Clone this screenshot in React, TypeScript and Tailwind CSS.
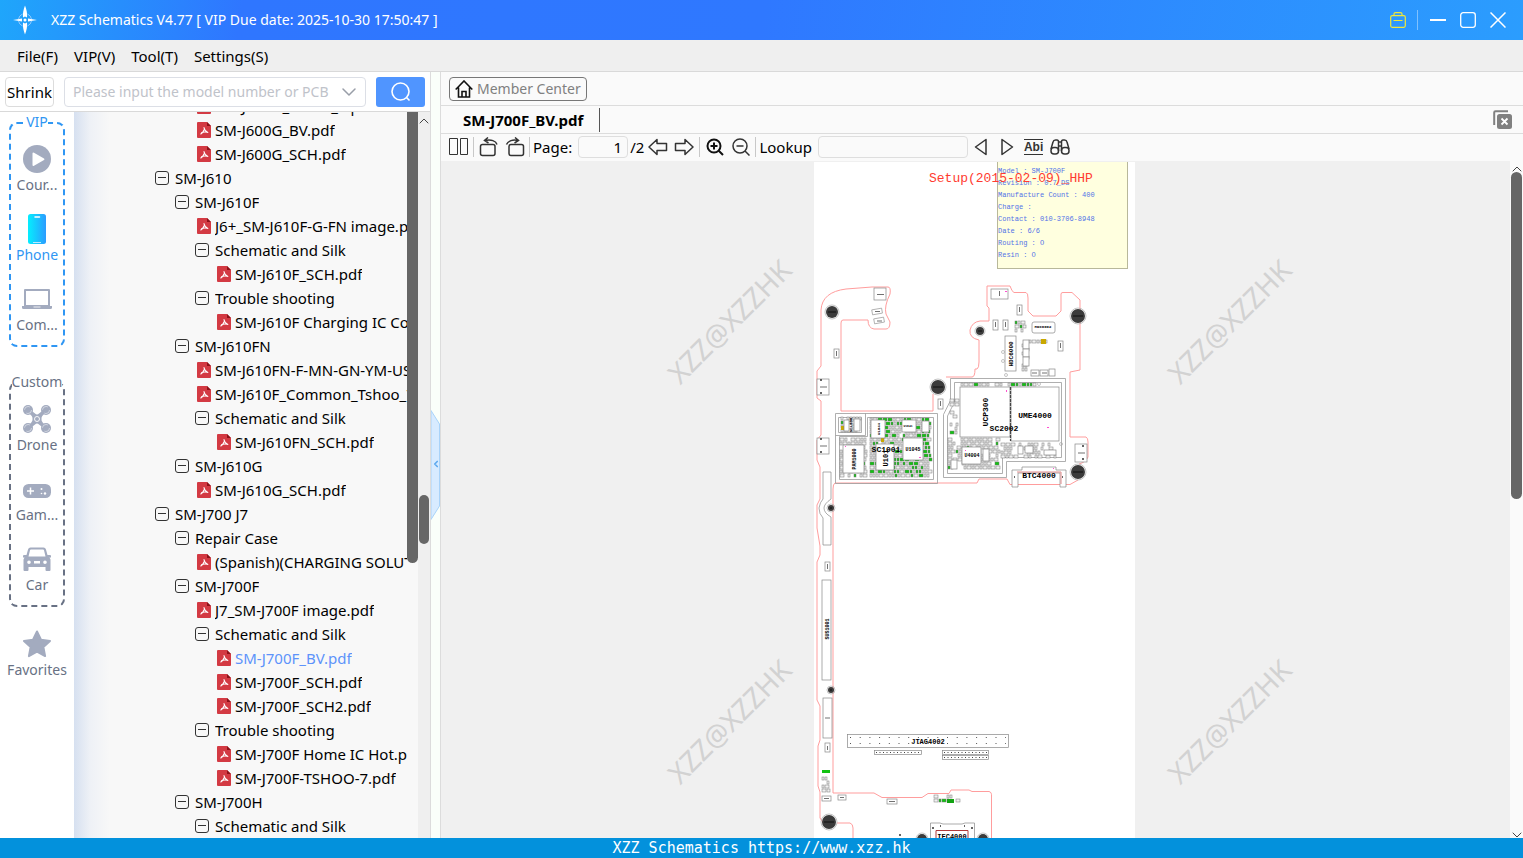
import React, { useState } from 'react';
import { ChevronDown, ChevronUp, ChevronLeft } from 'lucide-react';

type TreeRow = {
  label: string;
  depth: number;
  file?: boolean;
};

const indents = ['pl-[81px]', 'pl-[101px]', 'pl-[121px]', 'pl-[141px]'];

const treeRows: TreeRow[] = [
  { label: 'SM-J600G_Tshoo_7.pdf', depth: 2, file: true },
  { label: 'SM-J600G_BV.pdf', depth: 2, file: true },
  { label: 'SM-J600G_SCH.pdf', depth: 2, file: true },
  { label: 'SM-J610', depth: 0 },
  { label: 'SM-J610F', depth: 1 },
  { label: 'J6+_SM-J610F-G-FN image.pdf', depth: 2, file: true },
  { label: 'Schematic and Silk', depth: 2 },
  { label: 'SM-J610F_SCH.pdf', depth: 3, file: true },
  { label: 'Trouble shooting', depth: 2 },
  { label: 'SM-J610F Charging IC Code.pdf', depth: 3, file: true },
  { label: 'SM-J610FN', depth: 1 },
  { label: 'SM-J610FN-F-MN-GN-YM-US.pdf', depth: 2, file: true },
  { label: 'SM-J610F_Common_Tshoo_7.pdf', depth: 2, file: true },
  { label: 'Schematic and Silk', depth: 2 },
  { label: 'SM-J610FN_SCH.pdf', depth: 3, file: true },
  { label: 'SM-J610G', depth: 1 },
  { label: 'SM-J610G_SCH.pdf', depth: 2, file: true },
  { label: 'SM-J700 J7', depth: 0 },
  { label: 'Repair Case', depth: 1 },
  { label: '(Spanish)(CHARGING SOLUT.pdf', depth: 2, file: true },
  { label: 'SM-J700F', depth: 1 },
  { label: 'J7_SM-J700F image.pdf', depth: 2, file: true },
  { label: 'Schematic and Silk', depth: 2 },
  { label: 'SM-J700F_BV.pdf', depth: 3, file: true },
  { label: 'SM-J700F_SCH.pdf', depth: 3, file: true },
  { label: 'SM-J700F_SCH2.pdf', depth: 3, file: true },
  { label: 'Trouble shooting', depth: 2 },
  { label: 'SM-J700F Home IC Hot.pdf', depth: 3, file: true },
  { label: 'SM-J700F-TSHOO-7.pdf', depth: 3, file: true },
  { label: 'SM-J700H', depth: 1 },
  { label: 'Schematic and Silk', depth: 2 }
];

const PdfIcon = () => (
  <svg viewBox="0 0 14 16" className="h-4 w-3.5 shrink-0">
    <path d="M1 0h9l4 4v11a1 1 0 0 1-1 1H1a1 1 0 0 1-1-1V1a1 1 0 0 1 1-1z" fill="#d33a43" />
    <path d="M10 0l4 4h-4z" fill="#8c1219" />
    <path d="M7 5.500Q7.300 8.500 10.800 10.500M7.300 7.500Q6 10.500 3.800 12M4.500 10.800Q7 9.500 10.500 10.300" fill="none" stroke="#fff" strokeWidth="1.100" strokeLinecap="round" />
  </svg>
);

const CollapseIcon = () => (
  <svg viewBox="0 0 14 14" className="h-3.5 w-3.5 shrink-0" fill="none" stroke="#333">
    <rect x="0.5" y="0.5" width="13" height="13" rx="2.500" />
    <path d="M3 6.500h8" />
  </svg>
);

const LogoIcon = () => (
  <svg viewBox="0 0 24 30" className="h-[30px] w-6" fill="#fff">
    <path d="M12 0.500c1.500 4 2.500 8 2 12l-2-1-2 1c-.5-4 .5-8 2-12z" />
    <path d="M12 29.500c1.500-4 2.500-8 2-12l-2 1-2-1c-.5 4 .5 8 2 12z" />
    <path d="M0 15l9-1.500v3zM24 15l-9-1.500v3z" />
    <path d="M5.500 14a7 7 0 0 1 4-5M14.500 9a7 7 0 0 1 4 5M18.500 16a7 7 0 0 1-4 5M9.500 21a7 7 0 0 1-4-5" fill="none" stroke="#8fcaff" strokeWidth="1" />
    <circle cx="12" cy="15" r="1.500" />
  </svg>
);

const CourseIcon = () => (
  <svg viewBox="0 0 28 28" className="h-7 w-7">
    <circle cx="14" cy="14" r="14" fill="#a3abbf" />
    <path d="M9.500 8.500v11.500a1 1 0 0 0 1.500.8l10-5.800a1 1 0 0 0 0-1.600l-10-5.700a1 1 0 0 0-1.500.8z" fill="#fff" />
  </svg>
);

const PhoneIcon = () => (
  <svg viewBox="0 0 18 30" className="h-[30px] w-[18px]">
    <defs>
      <linearGradient id="phoneFill" x1="0" x2="1">
        <stop offset="0" stopColor="#05eefe" />
        <stop offset="1" stopColor="#2b9cff" />
      </linearGradient>
    </defs>
    <rect width="18" height="30" rx="2.500" fill="url(#phoneFill)" />
    <path d="M7 3h4.500" stroke="#fff" strokeWidth="1.500" strokeLinecap="round" />
    <path d="M5 28.500h8" stroke="#bdeaff" strokeWidth="1" />
  </svg>
);

const ComputerIcon = () => (
  <svg viewBox="0 0 30 20" className="h-5 w-[30px]">
    <path d="M3 1h24v16H3z" fill="none" stroke="#a3abbf" strokeWidth="2" strokeLinejoin="round" />
    <path d="M0 17h30v1.500a1.500 1.500 0 0 1-1.500 1.500h-27A1.500 1.500 0 0 1 0 18.500z" fill="#a3abbf" />
    <path d="M11.500 18h7" stroke="#fff" strokeWidth=".8" />
  </svg>
);

const DroneIcon = () => (
  <svg viewBox="0 0 28 28" className="h-7 w-7">
    <path d="M5 5Q11 10 11.500 14Q11 18 5 23M23 5Q17 10 16.500 14Q17 18 23 23M5 5L14 12L23 5M5 23L14 16L23 23" fill="none" stroke="#a3abbf" strokeWidth="3" />
    <circle cx="14" cy="14" r="4.500" fill="#a3abbf" />
    <circle cx="14" cy="14" r="2.500" fill="none" stroke="#fff" strokeWidth=".9" />
    {[[5, 5], [23, 5], [5, 23], [23, 23]].map(([cx, cy]) => (
      <g key={`${cx}-${cy}`}>
        <circle cx={cx} cy={cy} r="5" fill="#a3abbf" />
        <circle cx={cx} cy={cy} r="3.500" fill="none" stroke="#e4e7ee" strokeWidth=".7" strokeDasharray="7 4" />
      </g>
    ))}
  </svg>
);

const GameIcon = () => (
  <svg viewBox="0 -3 28 17" className="h-[17px] w-7">
    <rect width="28" height="14" rx="5.500" fill="#a3abbf" />
    <path d="M4 7h7M7.500 3.500v7" stroke="#fff" strokeWidth="1.500" />
    <circle cx="18.500" cy="5" r="1" fill="#fff" />
    <circle cx="22" cy="9.500" r="1.200" fill="#fff" />
    <circle cx="18.500" cy="9.500" r=".8" fill="#fff" />
  </svg>
);

const CarIcon = () => (
  <svg viewBox="0 0 28 24" className="h-6 w-7" fill="#a3abbf">
    <path fillRule="evenodd" d="M7.500 0.500h13a2.500 2.500 0 0 1 2.400 1.800L24.500 8H27a1 1 0 0 1 1 1v1.500h-1.500l1 2V23a1 1 0 0 1-1 1h-3a1 1 0 0 1-1-1v-3h-17v3a1 1 0 0 1-1 1h-3a1 1 0 0 1-1-1V12.500l1-2H0V9a1 1 0 0 1 1-1h2.500l1.600-5.700A2.500 2.500 0 0 1 7.500.5zM8 2.500a1 1 0 0 0-1 .8L5.500 9.500h17L21 3.300a1 1 0 0 0-1-.8zM6 13.500a1.800 1.800 0 1 0 0 3.600 1.800 1.800 0 0 0 0-3.600zm16 0a1.800 1.800 0 1 0 0 3.600 1.800 1.800 0 0 0 0-3.600zM11 14v2.500h6V14z" />
  </svg>
);

const StarIcon = () => (
  <svg viewBox="0 0 28 27" className="h-7 w-7" fill="#a3abbf" stroke="#a3abbf" strokeWidth="2" strokeLinejoin="round">
    <path d="M14 1l4 8.200 9 1.200-6.600 6.200 1.700 9L14 21.200 5.900 25.600l1.700-9L1 10.400l9-1.200z" />
  </svg>
);

const vipItems = [
  { label: 'Cour...', icon: <CourseIcon /> },
  { label: 'Phone', icon: <PhoneIcon />, active: true },
  { label: 'Com...', icon: <ComputerIcon /> }
];

const customItems = [
  { label: 'Drone', icon: <DroneIcon /> },
  { label: 'Gam...', icon: <GameIcon /> },
  { label: 'Car', icon: <CarIcon /> }
];

const SideItem: React.FC<{ label: string; icon: React.ReactNode; active?: boolean }> = ({ label, icon, active }) => (
  <button className={`flex w-full flex-col items-center ${active ? 'text-[#2f96f3]' : 'text-[#687184]'}`}>
    <span className="flex h-9 items-center pt-0.5">{icon}</span>
    <span className="h-5 leading-[18px]">{label}</span>
  </button>
);

// Small surface-mount parts packed in a block, same layout on every render
const packParts = (x0: number, y0: number, x1: number, y1: number, seed: number, greenRate: number, fillRate: number) => {
  let state = seed;
  const rand = () => {
    state = (state * 1103515245 + 12345) % 2147483648;
    return state / 2147483648;
  };
  const parts: { x: number; y: number; w: number; h: number; fill: string }[] = [];
  for (let y = y0; y < y1 - 2; y += 4) {
    let x = x0;
    while (x < x1 - 2) {
      const w = rand() > 0.6 ? 4 : 2;
      if (rand() < fillRate) {
        parts.push({ x, y, w: Math.min(w, x1 - x), h: 3, fill: rand() < greenRate ? '#12c212' : '#f1f1f1' });
      }
      x += w + 1;
    }
  }
  return parts;
};

const parts = [
  ...packParts(870, 418, 932, 479, 7, 0.42, 0.95),
  ...packParts(840, 438, 868, 479, 21, 0.08, 0.7),
  ...packParts(841, 417, 862, 432, 5, 0.15, 0.8),
  ...packParts(948, 438, 1001, 472, 33, 0.05, 0.85),
  ...packParts(1001, 443, 1058, 458, 9, 0.08, 0.7),
  ...packParts(950, 395, 960, 437, 14, 0.12, 0.5),
  ...packParts(961, 383, 1006, 387, 2, 0.1, 0.95),
  ...packParts(1008, 383, 1036, 387, 3, 0.7, 0.95),
  ...packParts(1015, 321, 1026, 333, 8, 0.35, 0.9),
  ...packParts(1022, 340, 1029, 374, 12, 0.02, 0.9),
  ...packParts(1029, 340, 1050, 346, 6, 0.1, 0.8),
  ...packParts(822, 777, 830, 795, 4, 0.02, 0.8),
  ...packParts(934, 795, 962, 804, 19, 0.3, 0.6)
];

const chips: [number, number, number, number][] = [
  [874, 288, 12, 12], [991, 289, 17, 10], [1017, 305, 5, 10], [993, 320, 5, 10], [1003, 320, 5, 10],
  [1005, 336, 11, 35], [1058, 341, 5, 10], [834, 349, 5, 9], [938, 399, 5, 10], [1031, 370, 8, 6],
  [1040, 370, 8, 6], [1049, 369, 6, 7], [1023, 340, 6, 9], [1023, 349, 6, 8], [1023, 357, 6, 9],
  [817, 379, 12, 16], [817, 438, 12, 16], [1075, 444, 12, 18], [825, 562, 5, 9], [822, 580, 9, 100],
  [823, 698, 9, 40], [825, 743, 5, 9], [822, 796, 9, 5], [838, 795, 8, 5], [887, 799, 10, 5],
  [843, 445, 21, 28], [871, 420, 14, 18], [902, 420, 14, 12], [903, 438, 20, 22], [876, 444, 18, 26],
  [844, 420, 5, 11], [854, 419, 6, 12], [922, 421, 7, 11], [962, 447, 19, 17], [983, 449, 6, 12], [951, 460, 6, 9],
  [1018, 446, 5, 8], [1025, 446, 8, 7], [1044, 450, 12, 5]
];

const partLabels: { x: number; y: number; text: string; size: string; turn?: boolean }[] = [
  { x: 988, y: 412, text: 'UCP300', size: 'text-[8px]', turn: true },
  { x: 1035, y: 418, text: 'UME4000', size: 'text-[8px]' },
  { x: 1004, y: 431, text: 'SC2002', size: 'text-[8px]' },
  { x: 886, y: 452, text: 'SC1001', size: 'text-[8px]' },
  { x: 1039, y: 478, text: 'BTC4000', size: 'text-[8px]' },
  { x: 928, y: 744, text: 'JTAG4002', size: 'text-[7px]' },
  { x: 952, y: 839, text: 'IEC4000', size: 'text-[7px]' },
  { x: 1013, y: 354, text: 'HDC6000', size: 'text-[6px]', turn: true },
  { x: 856, y: 459, text: 'PAM1000', size: 'text-[5px]', turn: true },
  { x: 888, y: 458, text: 'U101', size: 'text-[7px]', turn: true },
  { x: 852, y: 425, text: 'SC1000', size: 'text-[4px]', turn: true },
  { x: 829, y: 629, text: 'SUS1001', size: 'text-[5px]', turn: true },
  { x: 880, y: 429, text: 'U1044', size: 'text-[4px]', turn: true },
  { x: 913, y: 451, text: 'U1045', size: 'text-[5px]' },
  { x: 908, y: 427, text: 'U1041', size: 'text-[3px]' },
  { x: 972, y: 457, text: 'U4004', size: 'text-[5px]' },
  { x: 1043, y: 328, text: 'HDC6002', size: 'text-[4px]' }
];

const holes: [number, number, number][] = [
  [832, 312, 6], [1078, 316, 7], [980, 331, 4], [938, 387, 7], [1078, 472, 7],
  [831, 508, 3], [831, 690, 3], [829, 822, 7], [922, 839, 5], [983, 839, 5]
];

const noteLines = [
  'Model : SM-J700F', 'Revision : 0.7_DS', 'Manufacture Count : 400', 'Charge :',
  'Contact : 010-3706-8948', 'Date : 6/6', 'Routing : O', 'Resin : O'
];

const BoardDrawing = () => (
  <svg viewBox="814 162 321 676" className="h-[676px] w-[321px] bg-white font-['Liberation_Mono',monospace]">
    <rect x="997.500" y="161.500" width="130" height="107" fill="#ffffdf" stroke="#b8b89a" />
    {noteLines.map((line, i) => (
      <text key={line} x="998" y={173 + i * 12} fill="#5273e8" className="text-[7px]">{line}</text>
    ))}
    <text x="929" y="182" fill="#ff3b30" className="text-[13px]">Setup(2015-02-09)_HHP</text>

    {/* Board outline */}
    <g fill="none" stroke="#ff9d9d">
      <path d="M821 366V310Q822 292 846 289L872 287H888Q891 287 890 294Q884 306 886 314L890 322Q890 329 886 329H874Q868 328 868 320H843Q841 320 841 323V411H933V394M946 377H972Q975 377 975 369H977Q979 368 979 362V340Q969 338 970 330Q972 322 980 321H989V308L987 306V286H1010Q1012 292 1014 292.500H1026Q1028 293 1028 298V311L1033 316H1056L1061 311V294Q1061 292 1064 292.500H1072L1080 300V370L1070 372V437H1086Q1088 438 1088 442V457Q1086 462 1079 464M1078 480L1070 484.500H1010L1007 479H979L977 483H835Q833 484 833 489V793H874L882 797.500H922L928 793.500H949L951 790H969L972 791.500H989Q992 792 991.500 797V808V838" />
      <path d="M821 366L817 371V398L821 401V435L817 440V460L820 467V499L817 505V528L820 546V555L817 562V700L820 706V740L818 746V786L820 792V818L824 824M837 823H850Q853 824 853 828V838" />
    </g>

    {/* Shield frames */}
    <g fill="none" stroke="#9b9b9b">
      <path d="M835.500 413.500H937.500V483.500H835.500ZM839.500 436.500H867.500V417.500H933.500V479.500H839.500ZM835.500 435.500H865.500V413.500M838.500 417.500H861.500V432.500H838.500Z" strokeWidth=".8" />
      <path d="M950.500 378.500H1065.500V461.500H1006.500V477.500H943.500V414.500L950.500 400.500ZM954.500 382.500H1061.500V457.500H1002.500V473.500H947.500V416L954.500 402Z" strokeWidth=".8" />
    </g>

    {parts.map((part, i) => (
      <rect key={i} x={part.x} y={part.y} width={part.w} height={part.h} fill={part.fill} stroke="#777" strokeWidth=".5" />
    ))}
    <rect x="822" y="770" width="8" height="3" fill="#12c212" />
    <rect x="1041" y="339" width="5" height="5" fill="#c9a800" />
    <rect x="841" y="426" width="4" height="4" fill="#c9a800" />
    <rect x="881" y="438" width="3" height="4" fill="#c9a800" />
    <rect x="947" y="799" width="7" height="4" fill="#12a212" />

    {/* Large packages */}
    <g fill="#fff" stroke="#888" strokeWidth=".7">
      <rect x="960" y="387" width="50" height="50" />
      <rect x="1011" y="387" width="48" height="54" />
      {chips.map(([x, y, w, h]) => (
        <rect key={`${x}-${y}`} x={x} y={y} width={w} height={h} />
      ))}
      <rect x="1032" y="322" width="23" height="11" rx="2" />
      <path d="M1012 470H1022V467H1056V470H1066V487H1060V473H1018V487H1012Z" />
      <path d="M823 472H831V499Q824 504 824 508Q824 513 831 517V545H823V518Q819 514 819 508Q820 502 823 499Z" fill="none" />
      <rect x="847.500" y="734.500" width="161" height="13" />
      <rect x="874.500" y="750.500" width="47" height="4" />
      <rect x="942.500" y="750.500" width="46" height="4" />
      <rect x="942.500" y="755.500" width="46" height="4" />
      <path d="M930.500 840V823H940L943 824H962L965 823H974.500V840" />
    </g>
    <path d="M1010.500 387V441" stroke="#444" strokeWidth="1.200" strokeDasharray="3 1" />
    <path d="M1017 472H1061V484" fill="none" stroke="#e08a8a" />
    <path d="M936 840V830.500H968V840" fill="none" stroke="#b03a3a" />
    <path d="M850 737.500H1006M850 743.500H1006" stroke="#555" strokeDasharray="1 8.700" />
    <path d="M876 752.500H920M944 752.500H987M944 757.500H987" stroke="#444" strokeDasharray="1 2.500" />
    <g fill="#fff" stroke="#999" strokeWidth=".7">
      <rect x="872" y="309" width="10" height="5" transform="rotate(-10 877 311)" />
      <rect x="874" y="318" width="10" height="5" transform="rotate(-10 879 320)" />
    </g>
    <g stroke="#333" strokeWidth="1">
      <path d="M875 311.500h5M877 321h5M877 294.500h7M820 387h7M820 446h7M1078 453h7M825 718h5M824 798.500h5M889 801.500h6M840 797.500h4M1032 373h5M1042 373h5M827.500 746v4M836.500 351v5M940.500 401v5M995.500 322v5M1005.500 322v5M1019.500 307v5M1060.500 343v5M827.500 564v5M999.500 291v5" strokeWidth=".7" />
      <path d="M820 380h2M820 393h2M820 439h2M820 452h2M1082 446h2M1082 459h2M1014 477h1M1062 477h1M899 835h2M932 828h2M971 828h2M940 826h1M964 826h1" strokeWidth="1.500" />
    </g>
    <g fill="none" stroke="#aaa" strokeWidth=".7">
      <circle cx="1003" cy="352" r="1.500" />
      <circle cx="1003" cy="361" r="1.500" />
      <circle cx="1006" cy="375" r="1.500" />
      <circle cx="1039" cy="384" r="1.500" />
      <circle cx="1061" cy="444" r="1.500" />
    </g>

    {holes.map(([cx, cy, r]) => (
      <g key={`${cx}-${cy}`}>
        <circle cx={cx} cy={cy} r={r + 1} fill="none" stroke="#aaa" strokeWidth=".7" />
        <circle cx={cx} cy={cy} r={r} fill="#3b3b3b" />
        <path d={`M${cx - r + 2} ${cy}h${2 * r - 4}`} stroke="#111" />
      </g>
    ))}
    <g fill="#ff4fd0">
      <rect x="1006" y="390" width="1" height="2" />
      <rect x="1047" y="427" width="2" height="1" />
      <rect x="919" y="457" width="2" height="1" />
      <rect x="845" y="446" width="1" height="1" />
      <rect x="1053" y="468" width="1" height="1" />
      <rect x="965" y="450" width="1" height="1" />
      <rect x="1005" y="291" width="2" height="1" />
    </g>

    {partLabels.map(label => (
      <text
        key={label.text}
        x={label.x}
        y={label.y}
        textAnchor="middle"
        transform={label.turn ? `rotate(-90 ${label.x} ${label.y})` : undefined}
        className={`font-bold ${label.size}`}
      >
        {label.text}
      </text>
    ))}
  </svg>
);

const Divider = () => <span className="h-5 w-px bg-[#c8c8c8]" />;

const Toolbar = () => {
  const [page, setPage] = useState('1');
  const [lookup, setLookup] = useState('');

  return (
    <div className="flex h-[27px] items-center bg-[#fafafa] pb-0.5 pl-2">
      <button aria-label="Two pages">
        <svg viewBox="0 0 20 18" className="h-[18px] w-5" fill="none" stroke="#333">
          <path d="M.5.5h8v16h-8zM11.500.5h7v16h-7z" />
        </svg>
      </button>
      <span className="ml-1 flex"><Divider /></span>
      <button aria-label="Rotate left" className="ml-[5px]">
        <svg viewBox="0 0 20 20" className="h-5 w-5" fill="none" stroke="#333" strokeWidth="1.500">
          <rect x="1.500" y="7.500" width="14.500" height="11" rx="2" />
          <path d="M18 7.500C17 4 12 2 6 3.500M9 .5L5.500 3.500 9.500 6" />
        </svg>
      </button>
      <button aria-label="Rotate right" className="ml-1.5">
        <svg viewBox="0 0 20 20" className="h-5 w-5" fill="none" stroke="#333" strokeWidth="1.500">
          <rect x="4" y="7.500" width="14.500" height="11" rx="2" />
          <path d="M1.500 7.500C3 4 8 2 13 3.500M10 .5L13.500 3.500 9.500 6" />
        </svg>
      </button>
      <span className="ml-1 flex"><Divider /></span>
      <label htmlFor="page" className="ml-[3px]">Page:</label>
      <input
        id="page"
        value={page}
        onChange={(e) => setPage(e.target.value)}
        className="ml-1.5 h-[22px] w-[50px] rounded-sm border border-[#dedede] bg-[#fafafa] pr-[5px] text-right outline-none"
      />
      <span className="ml-0.5">/2</span>
      <button aria-label="Previous page" className="ml-1">
        <svg viewBox="0 0 20 18" className="h-[18px] w-5" fill="none" stroke="#333" strokeWidth="1.500" strokeLinejoin="round">
          <path d="M1 9l8-7.500V5.500h9.500v7H9v4z" />
        </svg>
      </button>
      <button aria-label="Next page" className="ml-1.5">
        <svg viewBox="0 0 20 18" className="h-[18px] w-5" fill="none" stroke="#333" strokeWidth="1.500" strokeLinejoin="round">
          <path d="M19 9l-8-7.500V5.500H1.500v7H11v4z" />
        </svg>
      </button>
      <span className="ml-[5px] flex"><Divider /></span>
      <button aria-label="Zoom in" className="ml-1.5">
        <svg viewBox="0 0 18 18" className="h-[18px] w-[18px]" fill="none" stroke="#111" strokeWidth="2">
          <circle cx="8" cy="8" r="6.500" />
          <path d="M12.500 12.500L17 17M4.500 8h7M8 4.500v7" />
        </svg>
      </button>
      <button aria-label="Zoom out" className="ml-2">
        <svg viewBox="0 0 18 18" className="h-[18px] w-[18px]" fill="none" stroke="#333" strokeWidth="1.500">
          <circle cx="8" cy="8" r="7" />
          <path d="M13 13l4.500 4.500M4.500 8h7" />
        </svg>
      </button>
      <span className="ml-[5px] flex"><Divider /></span>
      <label htmlFor="lookup" className="ml-[3px]">Lookup</label>
      <input
        id="lookup"
        value={lookup}
        onChange={(e) => setLookup(e.target.value)}
        className="ml-1.5 h-[22px] w-[150px] rounded-sm border border-[#dedede] bg-[#fafafa] px-1.5 outline-none"
      />
      <button aria-label="Find previous" className="ml-1.5">
        <svg viewBox="0 0 14 18" className="h-[18px] w-3.5" fill="none" stroke="#333" strokeWidth="1.500" strokeLinejoin="round">
          <path d="M12 1.500v15L1.500 9z" />
        </svg>
      </button>
      <button aria-label="Find next" className="ml-3">
        <svg viewBox="0 0 14 18" className="h-[18px] w-3.5" fill="none" stroke="#333" strokeWidth="1.500" strokeLinejoin="round">
          <path d="M2 1.500v15L12.500 9z" />
        </svg>
      </button>
      <button className="ml-2.5 h-4 border-y border-[#333] font-['Liberation_Sans',sans-serif] text-xs font-bold leading-3.5 text-[#333]">
        Abi
      </button>
      <button aria-label="Search document" className="ml-[7px]">
        <svg viewBox="0 0 20 16" className="h-4 w-5" fill="none" stroke="#333" strokeWidth="1.500">
          <path d="M1 10L3 3Q3.500 1 5.500 1H7Q8.500 1 8.500 3V12M19 10L17 3Q16.500 1 14.500 1H13Q11.500 1 11.500 3V12M8.500 3h3M8.500 7h3" />
          <rect x="1" y="8.500" width="7.500" height="6.500" rx="3" />
          <rect x="11.500" y="8.500" width="7.500" height="6.500" rx="3" />
        </svg>
      </button>
    </div>
  );
};

const Watermark = () => (
  <div className="pointer-events-none absolute inset-0 overflow-hidden text-[28px] leading-none text-[#d2d2d2]">
    <span className="absolute left-[288px] top-[160px] -translate-x-1/2 -translate-y-1/2 -rotate-45">XZZ@XZZHK</span>
    <span className="absolute left-[788px] top-[160px] -translate-x-1/2 -translate-y-1/2 -rotate-45">XZZ@XZZHK</span>
    <span className="absolute left-[288px] top-[560px] -translate-x-1/2 -translate-y-1/2 -rotate-45">XZZ@XZZHK</span>
    <span className="absolute left-[788px] top-[560px] -translate-x-1/2 -translate-y-1/2 -rotate-45">XZZ@XZZHK</span>
  </div>
);

const App: React.FC = () => {
  const [query, setQuery] = useState('');
  const [selected, setSelected] = useState('SM-J700F_BV.pdf');

  return (
    <div className="flex h-screen flex-col overflow-hidden bg-white font-['Noto_Sans',sans-serif] text-[15px] leading-6 text-black">
      {/* Title bar */}
      <header className="flex h-10 shrink-0 items-center bg-[linear-gradient(100deg,#1fa6fb_0px,#2f76ff_240px,#2f78ff_50%,#2b9dfe_100%)] pl-[13px] pr-[17px] text-white">
        <LogoIcon />
        <h1 className="ml-3.5 flex-1 text-sm">XZZ Schematics V4.77 [ VIP Due date: 2025-10-30 17:50:47 ]</h1>
        <button aria-label="Toolbox">
          <svg viewBox="0 0 16 16" className="h-4 w-4" fill="none" stroke="#f0e83a" strokeWidth="1.200">
            <rect x="0.700" y="3.700" width="14.600" height="11.600" rx="1.500" />
            <path d="M4 3.500V2Q4 .700 5.500.700H10.500Q12 .700 12 2V3.500M3.500 8.500h9" />
          </svg>
        </button>
        <span className="ml-[11px] h-5 w-px bg-white/40" />
        <button aria-label="Minimize" className="ml-3">
          <svg viewBox="0 0 16 16" className="h-4 w-4" stroke="#fff" strokeWidth="2"><path d="M0 8h16" /></svg>
        </button>
        <button aria-label="Maximize" className="ml-3.5">
          <svg viewBox="0 0 16 16" className="h-4 w-4" fill="none" stroke="#fff" strokeWidth="1.300">
            <rect x=".7" y=".7" width="14.600" height="14.600" rx="2.500" />
          </svg>
        </button>
        <button aria-label="Close" className="ml-3.5">
          <svg viewBox="0 0 16 16" className="h-4 w-4" stroke="#fff" strokeWidth="1.500"><path d="M.5.5l15 15M15.500.5l-15 15" /></svg>
        </button>
      </header>

      {/* Menu */}
      <nav className="flex h-8 shrink-0 items-center gap-4 border-b border-[#d9d9d9] bg-[#efefef] pl-[17px]">
        {['File(F)', 'VIP(V)', 'Tool(T)', 'Settings(S)'].map(item => (
          <button key={item}>{item}</button>
        ))}
      </nav>

      <div className="flex min-h-0 flex-1">
        {/* Left panel */}
        <aside className="flex w-[431px] shrink-0 flex-col border-r border-[#dcdcdc]">
          <form className="flex h-10 shrink-0 items-center border-b border-[#d9d9d9] pl-[5px]" onSubmit={(e) => e.preventDefault()}>
            <button type="button" className="h-[30px] w-[49px] whitespace-nowrap rounded border border-[#dcdcdc]">Shrink</button>
            <div className="ml-2.5 flex h-[30px] w-[302px] items-center rounded border border-[#dcdfe6] pl-2 pr-1">
              <input
                aria-label="Model number"
                placeholder="Please input the model number or PCB"
                value={query}
                onChange={(e) => setQuery(e.target.value)}
                className="min-w-0 flex-1 text-sm outline-none placeholder:text-[#bfc3ca]"
              />
              <ChevronDown className="h-6 w-6 text-[#999ea8]" strokeWidth={1.5} />
            </div>
            <button aria-label="Search" className="ml-2.5 flex h-[30px] w-[49px] items-center justify-center rounded-[3px] bg-[#5095ff]">
              <svg viewBox="0 0 20 20" className="h-5 w-5" fill="none" stroke="#fff" strokeWidth="1.600">
                <circle cx="9.500" cy="9.500" r="8.500" />
                <path d="M15.500 15.500l3 3" />
              </svg>
            </button>
          </form>

          <div className="flex min-h-0 flex-1">
            <div className="w-[74px] shrink-0 pt-px text-sm">
              <fieldset className="mx-[9px] rounded-lg border-2 border-dashed border-[#2f96f3] pb-[9px] pt-[7px]">
                <legend className="mx-auto h-5 leading-[18px] text-[#2f96f3]">VIP</legend>
                <div className="flex flex-col gap-3.5">
                  {vipItems.map(item => <SideItem key={item.label} {...item} />)}
                </div>
              </fieldset>
              <fieldset className="mx-[9px] mt-[26px] rounded-lg border-2 border-dashed border-[#687184] pb-[9px] pt-[7px]">
                <legend className="mx-auto h-5 leading-[18px] text-[#687184]">Custom</legend>
                <div className="flex flex-col gap-3.5">
                  {customItems.map(item => <SideItem key={item.label} {...item} />)}
                </div>
              </fieldset>
              <div className="mt-[18px]">
                <SideItem label="Favorites" icon={<StarIcon />} />
              </div>
            </div>

            <div className="min-w-0 flex-1 overflow-hidden bg-[#f8f8f8] bg-[linear-gradient(90deg,#d6e0f0_0px,#eef1f6_16px,#f8f8f8_36px)]">
              <ul className="-mt-[18px]">
                {treeRows.map((row, i) => (
                  <li key={i} className={`h-6 ${indents[row.depth]}`}>
                    <button
                      onClick={() => row.file && setSelected(row.label)}
                      className={`flex h-6 w-full items-center overflow-hidden whitespace-nowrap ${row.label === selected ? 'text-[#5d93fb]' : ''}`}
                    >
                      <span className="flex w-5 shrink-0">
                        {row.file ? <span className="pl-0.5"><PdfIcon /></span> : <CollapseIcon />}
                      </span>
                      <span className="min-w-0 overflow-hidden">{row.label}</span>
                    </button>
                  </li>
                ))}
              </ul>
            </div>
            <div className="w-[11px] shrink-0 bg-[#f8f8f8]">
              <div className="h-[451px] rounded-b-full bg-[#666]" />
            </div>
            <div className="flex w-3 shrink-0 flex-col items-center bg-[#efefef] pt-px">
              <ChevronUp className="h-4 w-4 shrink-0 text-[#444]" strokeWidth={1.5} />
              <div className="mt-[366px] h-[49px] w-2.5 shrink-0 rounded-full bg-[#666]" />
            </div>
          </div>
        </aside>

        {/* Splitter */}
        <div className="flex w-[10px] shrink-0 items-center border-r border-[#dcdcdc] bg-[#fafffa] pt-5">
          <button aria-label="Hide panel" className="relative h-[110px] w-[9px]">
            <svg viewBox="0 0 9 110" className="h-[110px] w-[9px]">
              <path d="M0 .5L8.500 14V96L0 109.500z" fill="#d8ebff" stroke="#a9d3f9" />
            </svg>
            <ChevronLeft className="absolute left-0 top-[49px] h-2.5 w-2.5 text-[#5ea9ee]" strokeWidth={4} />
          </button>
        </div>

        {/* Document viewer */}
        <main className="flex min-w-0 flex-1 flex-col">
          <div className="flex h-[34px] shrink-0 items-center border-b border-[#dcdcdc] bg-[#fafafa] pl-2">
            <button className="flex h-6 items-center gap-1 rounded border border-[#777] px-[5px] text-sm text-[#808080]">
              <svg viewBox="0 0 18 18" className="h-[18px] w-[18px]" fill="none" stroke="#111" strokeWidth="1.600">
                <path d="M.7 9.500L9 1l8.300 8.500M3.500 7.500V17h11V7.500M7 17v-5.500h4V17" />
              </svg>
              Member Center
            </button>
          </div>
          <div className="flex h-7 shrink-0 items-center justify-between border-b border-[#dcdcdc] bg-[#fafafa] pl-1.5 pr-[11px]">
            <button className="h-6 border-r border-[#555] px-4 font-bold leading-[22px]">SM-J700F_BV.pdf</button>
            <button aria-label="Close all tabs">
              <svg viewBox="0 0 19 19" className="h-[19px] w-[19px]">
                <path d="M1.200 15V2.500Q1.200 1.200 2.500 1.200H15" fill="none" stroke="#808080" strokeWidth="2" />
                <rect x="4" y="4" width="15" height="15" rx="2.500" fill="#808080" />
                <path d="M8.500 8.500l6 6M14.500 8.500l-6 6" stroke="#fff" strokeWidth="1.800" />
              </svg>
            </button>
          </div>
          <Toolbar />
          <div className="relative flex min-h-0 flex-1 overflow-hidden bg-[#f0f0f0]">
            <div className="flex flex-1 justify-center overflow-hidden pr-[15px] pt-px">
              <BoardDrawing />
            </div>
            <Watermark />
            <div className="absolute inset-y-0 right-0 flex w-[13px] flex-col items-center bg-[#fafafa]">
              <ChevronUp className="-mb-[5px] h-4 w-4 shrink-0 text-[#444]" strokeWidth={1.5} />
              <div className="h-[327px] w-[11px] shrink-0 rounded-full bg-[#666]" />
              <ChevronDown className="-mb-[5px] mt-auto h-4 w-4 shrink-0 text-[#444]" strokeWidth={1.5} />
            </div>
          </div>
        </main>
      </div>

      <footer className="h-5 shrink-0 bg-[#0391dc] text-center font-['DejaVu_Sans_Mono',monospace] leading-5 text-white">
        XZZ Schematics https://www.xzz.hk
      </footer>
    </div>
  );
};

export default App;
